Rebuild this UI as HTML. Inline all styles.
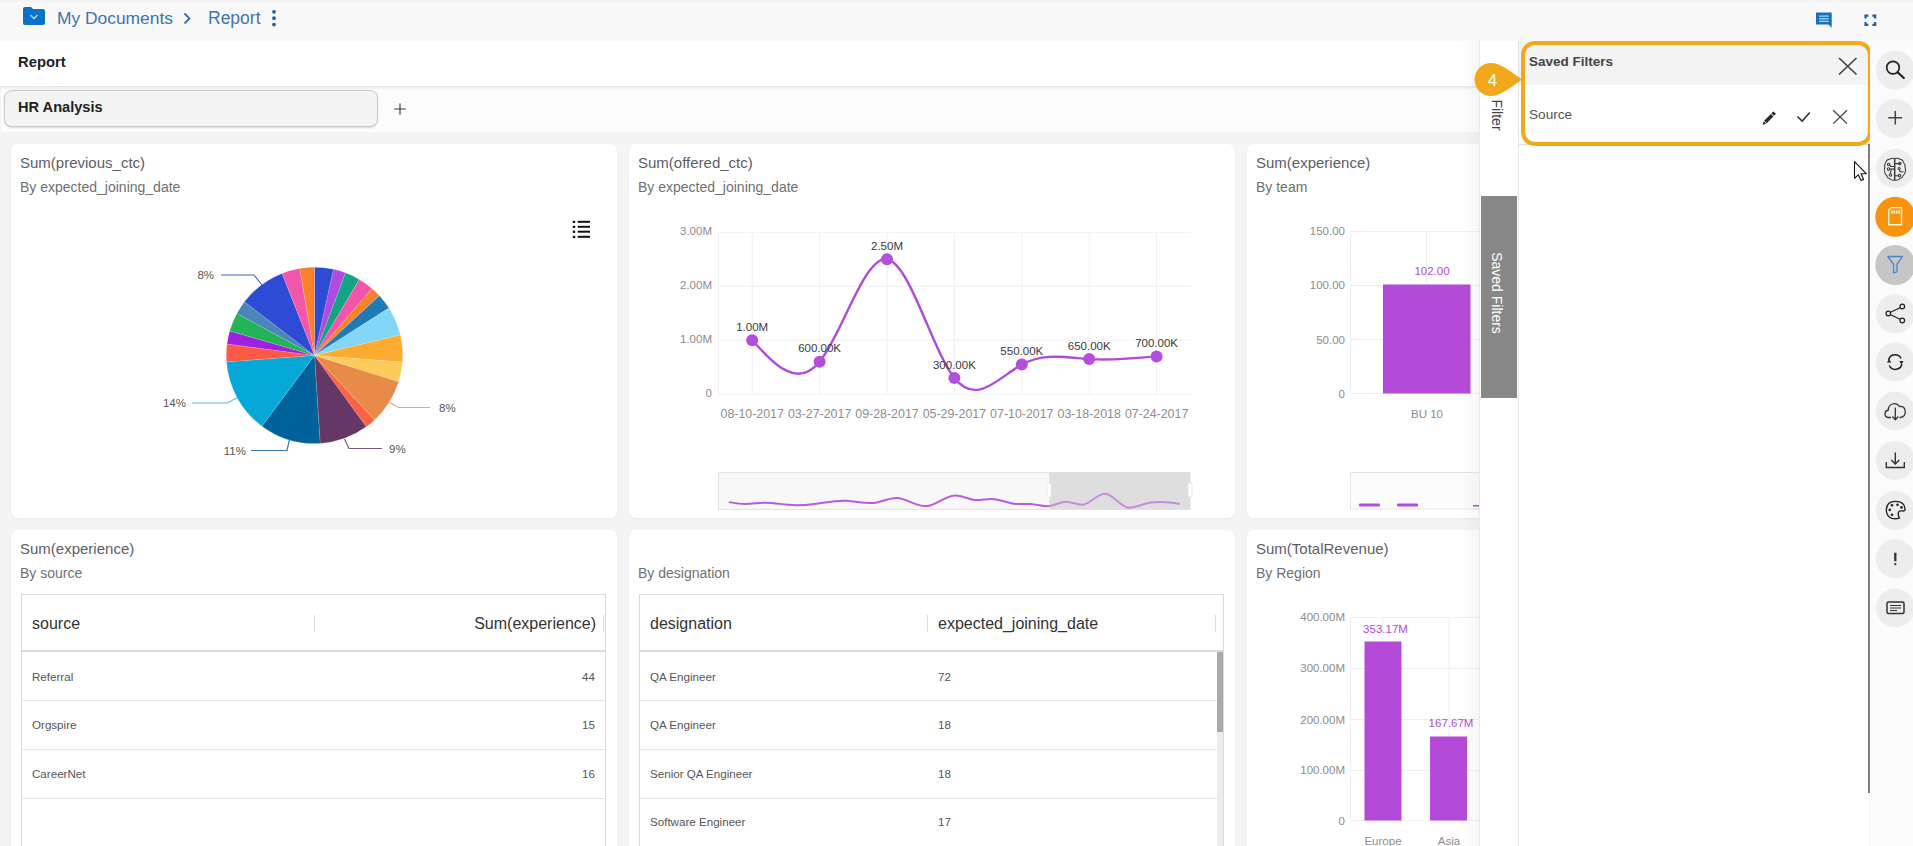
<!DOCTYPE html>
<html><head><meta charset="utf-8">
<style>
*{margin:0;padding:0;box-sizing:border-box}
html,body{width:1913px;height:846px;overflow:hidden;background:#f4f4f4;font-family:"Liberation Sans",sans-serif;position:relative}
.abs{position:absolute}
#topbar{left:0;top:0;width:1913px;height:41px;background:#f8f8f8;border-top:2px solid #f3f3f3}
#hdr{left:0;top:41px;width:1913px;height:45px;background:#fff;}
#tabs{left:0;top:86px;width:1913px;height:46px;background:#fdfdfd;box-shadow:inset 0 2px 3px rgba(0,0,0,.1)}
.card{position:absolute;background:#fff;border-radius:7px;box-shadow:0 1px 3px rgba(0,0,0,.05)}
.ttl{position:absolute;left:9px;font-size:15px;color:#5d5d68;white-space:nowrap}
.sub{position:absolute;left:9px;font-size:14px;color:#707070;white-space:nowrap}
.ax{font-family:"Liberation Sans",sans-serif;font-size:11px;fill:#8a8a8a}
.th{font-size:16px;color:#333;white-space:nowrap}
.td{font-size:11.6px;color:#555;white-space:nowrap}
.lbl{font-family:"Liberation Sans",sans-serif;font-size:11px;fill:#333}
</style></head><body>
<div id="topbar" class="abs"></div>
<div id="hdr" class="abs"></div>
<div id="tabs" class="abs"></div>

<!-- breadcrumb -->
<svg class="abs" style="left:22px;top:6px" width="24" height="20" viewBox="0 0 24 20">
  <path d="M1 3 Q1 1 3 1 H9 L11 3 H21 Q23 3 23 5 V17 Q23 19 21 19 H3 Q1 19 1 17 Z" fill="#0b72c6"/>
  <path d="M8.5 9 L12 12.5 L15.5 9" stroke="#90d2ff" stroke-width="1.6" fill="none"/>
</svg>
<div class="abs" style="left:57px;top:7.6px;font-size:17.4px;color:#3f74ad;white-space:nowrap">My Documents</div>
<svg class="abs" style="left:181px;top:11px" width="12" height="14" viewBox="0 0 12 14"><path d="M3.5 2.5 L8.5 7.5 L3.5 12.5" stroke="#3a70aa" stroke-width="1.8" fill="none"/></svg>
<div class="abs" style="left:208px;top:7.6px;font-size:17.5px;color:#3f74ad;white-space:nowrap">Report</div>
<svg class="abs" style="left:270px;top:9px" width="8" height="18" viewBox="0 0 8 18"><circle cx="4" cy="2.8" r="1.9" fill="#1e62a6"/><circle cx="4" cy="9.2" r="1.9" fill="#1e62a6"/><circle cx="4" cy="15.6" r="1.9" fill="#1e62a6"/></svg>

<div class="abs" style="left:18px;top:54px;font-size:14.8px;font-weight:bold;color:#222;white-space:nowrap">Report</div>
<div class="abs" style="left:4px;top:90px;width:374px;height:37px;border:1px solid #c9c9c9;border-radius:8px;background:#f4f4f4;box-shadow:0 1px 2px rgba(0,0,0,.15)"></div>
<div class="abs" style="left:18px;top:99px;font-size:14.6px;font-weight:bold;color:#222;white-space:nowrap">HR Analysis</div>
<svg class="abs" style="left:393px;top:102px" width="14" height="14" viewBox="0 0 14 14"><path d="M7 1.5 V12.5 M1.2 7 H12.8" stroke="#3a3a3a" stroke-width="1.15"/></svg>

<!-- cards -->
<div class="card" style="left:11px;top:144px;width:606px;height:374px">
  <div class="ttl" style="top:9.5px">Sum(previous_ctc)</div>
  <div class="sub" style="top:34.5px">By expected_joining_date</div>
</div>
<div class="card" style="left:629px;top:144px;width:606px;height:374px">
  <div class="ttl" style="top:9.5px">Sum(offered_ctc)</div>
  <div class="sub" style="top:34.5px">By expected_joining_date</div>
</div>
<div class="card" style="left:1247px;top:144px;width:606px;height:374px">
  <div class="ttl" style="top:9.5px">Sum(experience)</div>
  <div class="sub" style="top:34.5px">By team</div>
</div>
<div class="card" style="left:11px;top:530px;width:606px;height:374px">
  <div class="ttl" style="top:9.5px">Sum(experience)</div>
  <div class="sub" style="top:34.5px">By source</div>
</div>
<div class="card" style="left:629px;top:530px;width:606px;height:374px">
  <div class="sub" style="top:34.5px">By designation</div>
</div>
<div class="card" style="left:1247px;top:530px;width:606px;height:374px">
  <div class="ttl" style="top:9.5px">Sum(TotalRevenue)</div>
  <div class="sub" style="top:34.5px">By Region</div>
</div>

<!-- pie -->
<svg class="abs" style="left:11px;top:144px" width="606" height="374" viewBox="11 144 606 374">
<g stroke="#fff" stroke-width="0.3" stroke-opacity="0.45">
<path d="M314.5 355.4 L314.50 267.20 A88.2 88.2 0 0 1 333.59 269.29 Z" fill="#2e4bd6"/>
<path d="M314.5 355.4 L333.59 269.29 A88.2 88.2 0 0 1 345.53 272.84 Z" fill="#b04ae0"/>
<path d="M314.5 355.4 L345.53 272.84 A88.2 88.2 0 0 1 359.26 279.40 Z" fill="#12a583"/>
<path d="M314.5 355.4 L359.26 279.40 A88.2 88.2 0 0 1 372.02 288.53 Z" fill="#f256aa"/>
<path d="M314.5 355.4 L372.02 288.53 A88.2 88.2 0 0 1 379.42 295.70 Z" fill="#f8822c"/>
<path d="M314.5 355.4 L379.42 295.70 A88.2 88.2 0 0 1 388.89 308.01 Z" fill="#1f7bb4"/>
<path d="M314.5 355.4 L388.89 308.01 A88.2 88.2 0 0 1 400.30 334.96 Z" fill="#82d6f8"/>
<path d="M314.5 355.4 L400.30 334.96 A88.2 88.2 0 0 1 402.45 362.01 Z" fill="#fdab30"/>
<path d="M314.5 355.4 L402.45 362.01 A88.2 88.2 0 0 1 398.66 381.78 Z" fill="#fdcb5a"/>
<path d="M314.5 355.4 L398.66 381.78 A88.2 88.2 0 0 1 374.65 419.91 Z" fill="#e98b48"/>
<path d="M314.5 355.4 L374.65 419.91 A88.2 88.2 0 0 1 366.22 426.85 Z" fill="#fd6244"/>
<path d="M314.5 355.4 L366.22 426.85 A88.2 88.2 0 0 1 320.19 443.42 Z" fill="#643766"/>
<path d="M314.5 355.4 L320.19 443.42 A88.2 88.2 0 0 1 261.91 426.21 Z" fill="#00629b"/>
<path d="M314.5 355.4 L261.91 426.21 A88.2 88.2 0 0 1 226.54 361.86 Z" fill="#05a8d6"/>
<path d="M314.5 355.4 L226.54 361.86 A88.2 88.2 0 0 1 227.03 344.04 Z" fill="#ff5846"/>
<path d="M314.5 355.4 L227.03 344.04 A88.2 88.2 0 0 1 229.76 330.94 Z" fill="#a020e0"/>
<path d="M314.5 355.4 L229.76 330.94 A88.2 88.2 0 0 1 236.91 313.45 Z" fill="#22b455"/>
<path d="M314.5 355.4 L236.91 313.45 A88.2 88.2 0 0 1 244.43 301.83 Z" fill="#4b86b8"/>
<path d="M314.5 355.4 L244.43 301.83 A88.2 88.2 0 0 1 282.03 273.39 Z" fill="#2e4bd6"/>
<path d="M314.5 355.4 L282.03 273.39 A88.2 88.2 0 0 1 299.79 268.44 Z" fill="#f256aa"/>
<path d="M314.5 355.4 L299.79 268.44 A88.2 88.2 0 0 1 314.50 267.20 Z" fill="#f8822c"/>

</g>
<g fill="none" stroke-width="1.2">
<path d="M262 285 L254 275 H221" stroke="#4d5fd0"/>
<path d="M237 398 L227 403 H192" stroke="#5cc0e0"/>
<path d="M289.5 439.5 L287 450.5 H251" stroke="#3f7aa6"/>
<path d="M344.5 439 L349 448.5 H382" stroke="#7a5a7c"/>
<path d="M389 402 L398.5 407.5 H430" stroke="#eba37a"/>
</g>
<g fill="#555" font-size="11.5">
<text x="214" y="279" text-anchor="end">8%</text>
<text x="186" y="407" text-anchor="end">14%</text>
<text x="246" y="454.5" text-anchor="end">11%</text>
<text x="389" y="452.5">9%</text>
<text x="439" y="411.5">8%</text>
</g>
<g fill="#111">
<rect x="572.8" y="220.8" width="2.4" height="2.2"/><rect x="577.7" y="220.8" width="12.3" height="2"/>
<rect x="572.8" y="225.8" width="2.4" height="2.2"/><rect x="577.7" y="225.8" width="12.3" height="2"/>
<rect x="572.8" y="230.7" width="2.4" height="2.2"/><rect x="577.7" y="230.7" width="12.3" height="2"/>
<rect x="572.8" y="235.8" width="2.4" height="2.2"/><rect x="577.7" y="235.8" width="12.3" height="2"/>
</g>
</svg>

<!-- line -->
<svg class="abs" style="left:629px;top:144px" width="606" height="374" viewBox="629 144 606 374">
<g stroke="#f0f0f3" stroke-width="1"><line x1="718.5" y1="232.3" x2="1190.5" y2="232.3"/><line x1="718.5" y1="286.3" x2="1190.5" y2="286.3"/><line x1="718.5" y1="340.2" x2="1190.5" y2="340.2"/><line x1="718.5" y1="394.2" x2="1190.5" y2="394.2"/><line x1="752.2" y1="232.3" x2="752.2" y2="394.2"/><line x1="819.6" y1="232.3" x2="819.6" y2="394.2"/><line x1="887.0" y1="232.3" x2="887.0" y2="394.2"/><line x1="954.4" y1="232.3" x2="954.4" y2="394.2"/><line x1="1021.8" y1="232.3" x2="1021.8" y2="394.2"/><line x1="1089.2" y1="232.3" x2="1089.2" y2="394.2"/><line x1="1156.6" y1="232.3" x2="1156.6" y2="394.2"/><line x1="718.5" y1="232.3" x2="718.5" y2="394.2"/></g>
<g font-size="11.5" fill="#8c8c8c"><text x="712" y="234.9" text-anchor="end">3.00M</text><text x="712" y="288.9" text-anchor="end">2.00M</text><text x="712" y="342.8" text-anchor="end">1.00M</text><text x="712" y="396.8" text-anchor="end">0</text></g>
<g font-size="12.4" fill="#8c8c8c"><text x="752.2" y="417.5" text-anchor="middle">08-10-2017</text><text x="819.6" y="417.5" text-anchor="middle">03-27-2017</text><text x="887.0" y="417.5" text-anchor="middle">09-28-2017</text><text x="954.4" y="417.5" text-anchor="middle">05-29-2017</text><text x="1021.8" y="417.5" text-anchor="middle">07-10-2017</text><text x="1089.2" y="417.5" text-anchor="middle">03-18-2018</text><text x="1156.6" y="417.5" text-anchor="middle">07-24-2017</text></g>
<path d="M752.20 340.23 C774.67 364.67 797.13 389.11 819.60 361.82 C842.07 334.53 864.53 255.51 887.00 259.27 C909.47 263.04 931.93 349.58 954.40 378.01 C976.87 406.43 999.33 376.74 1021.80 364.52 C1044.27 352.30 1066.73 357.56 1089.20 359.12 C1111.67 360.68 1134.13 358.55 1156.60 356.42" fill="none" stroke="#ae4bd8" stroke-width="2.4"/>
<g fill="#b34fdc"><circle cx="752.2" cy="340.2" r="6"/><circle cx="819.6" cy="361.8" r="6"/><circle cx="887.0" cy="259.3" r="6"/><circle cx="954.4" cy="378.0" r="6"/><circle cx="1021.8" cy="364.5" r="6"/><circle cx="1089.2" cy="359.1" r="6"/><circle cx="1156.6" cy="356.4" r="6"/></g>
<g font-size="11.5" fill="#3a3a3a"><text x="752.2" y="330.7" text-anchor="middle">1.00M</text><text x="819.6" y="352.3" text-anchor="middle">600.00K</text><text x="887.0" y="249.8" text-anchor="middle">2.50M</text><text x="954.4" y="368.5" text-anchor="middle">300.00K</text><text x="1021.8" y="355.0" text-anchor="middle">550.00K</text><text x="1089.2" y="349.6" text-anchor="middle">650.00K</text><text x="1156.6" y="346.9" text-anchor="middle">700.00K</text></g>
<rect x="718.5" y="472.5" width="471.5" height="37" fill="#f8f8f8" stroke="#e2e2e2"/>
<rect x="1049.5" y="472.5" width="140.5" height="37" fill="#dedede"/>
<path d="M728.79 502.12 C734.30 503.05 739.81 503.97 745.32 503.99 C751.99 504.01 758.65 502.71 765.32 502.66 C772.87 502.59 780.42 504.13 787.98 504.79 C796.86 505.57 805.75 505.13 814.64 503.99 C825.30 502.61 835.96 500.22 846.63 500.79 C856.40 501.31 866.18 504.34 875.95 502.66 C883.06 501.43 890.17 497.72 897.28 498.12 C907.06 498.68 916.83 507.03 926.61 506.12 C935.94 505.25 945.27 495.96 954.60 495.46 C961.26 495.10 967.93 499.23 974.59 499.99 C980.37 500.65 986.15 498.77 991.92 498.92 C999.92 499.14 1007.92 503.27 1015.92 503.99 C1020.80 504.43 1025.69 503.60 1030.58 503.99 C1036.80 504.48 1043.02 506.95 1049.24 506.12 C1055.02 505.35 1060.79 501.73 1066.57 501.86 C1072.35 501.98 1078.12 505.85 1083.90 504.52 C1091.01 502.89 1098.12 493.38 1105.23 493.86 C1112.33 494.34 1119.44 504.80 1126.55 507.19 C1131.88 508.98 1137.22 506.23 1142.55 504.52 C1154.99 500.54 1167.43 502.27 1179.87 503.99" fill="none" stroke="#b04ad8" stroke-width="2" stroke-opacity="0.9"/>
<rect x="1049.5" y="473" width="140.5" height="36" fill="#dedede" fill-opacity="0.4"/>
<rect x="1047" y="483" width="4" height="14" rx="1" fill="#fff" stroke="#ddd" stroke-width="0.6"/>
<rect x="1188" y="483" width="4" height="14" rx="1" fill="#fff" stroke="#ddd" stroke-width="0.6"/>
</svg>

<!-- bars -->
<svg class="abs" style="left:1247px;top:144px" width="233" height="374" viewBox="1247 144 233 374">
<g stroke="#efeff3" stroke-width="1">
<line x1="1350.5" y1="231.5" x2="1480" y2="231.5"/><line x1="1350.5" y1="285.5" x2="1480" y2="285.5"/>
<line x1="1350.5" y1="339.5" x2="1480" y2="339.5"/><line x1="1350.5" y1="393.5" x2="1480" y2="393.5"/>
<line x1="1426.5" y1="231.5" x2="1426.5" y2="393.5"/><line x1="1350.5" y1="231.5" x2="1350.5" y2="393.5"/>
</g>
<g font-size="11.5" fill="#8c8c8c" text-anchor="end">
<text x="1345" y="235">150.00</text><text x="1345" y="289">100.00</text><text x="1345" y="343.5">50.00</text><text x="1345" y="397.5">0</text>
</g>
<rect x="1383" y="284.5" width="87.5" height="109" fill="#b44bd8"/>
<text x="1432" y="275" font-size="11.5" fill="#b04ad8" text-anchor="middle">102.00</text>
<text x="1427" y="418" font-size="11.5" fill="#8c8c8c" text-anchor="middle">BU 10</text>
<rect x="1350.5" y="472.5" width="140" height="36.5" fill="#fcfcfc" stroke="#e4e4e4"/>
<rect x="1359" y="503.5" width="21" height="3" rx="1" fill="#b44bd8"/>
<rect x="1397" y="503.5" width="21" height="3" rx="1" fill="#b44bd8"/>
<rect x="1473" y="505" width="7" height="1.5" fill="#b44bd8"/>
</svg>
<svg class="abs" style="left:1247px;top:530px" width="233" height="316" viewBox="1247 530 233 316">
<g stroke="#efeff3" stroke-width="1">
<line x1="1350.5" y1="617.5" x2="1480" y2="617.5"/><line x1="1350.5" y1="668.5" x2="1480" y2="668.5"/>
<line x1="1350.5" y1="719.5" x2="1480" y2="719.5"/><line x1="1350.5" y1="770.5" x2="1480" y2="770.5"/>
<line x1="1350.5" y1="820.5" x2="1480" y2="820.5"/>
<line x1="1383" y1="617.5" x2="1383" y2="820.5"/><line x1="1449" y1="617.5" x2="1449" y2="820.5"/>
<line x1="1350.5" y1="617.5" x2="1350.5" y2="820.5"/>
</g>
<g font-size="11.5" fill="#8c8c8c" text-anchor="end">
<text x="1345" y="621">400.00M</text><text x="1345" y="672">300.00M</text><text x="1345" y="723.5">200.00M</text><text x="1345" y="774">100.00M</text><text x="1345" y="824.5">0</text>
</g>
<rect x="1364.5" y="641.5" width="37" height="179" fill="#b44bd8"/>
<rect x="1430" y="736.5" width="37" height="84" fill="#b44bd8"/>
<text x="1385.5" y="633" font-size="11.5" fill="#b04ad8" text-anchor="middle">353.17M</text>
<text x="1451" y="727" font-size="11.5" fill="#b04ad8" text-anchor="middle">167.67M</text>
<text x="1383" y="845" font-size="11.5" fill="#8c8c8c" text-anchor="middle">Europe</text>
<text x="1449" y="845" font-size="11.5" fill="#8c8c8c" text-anchor="middle">Asia</text>
</svg>
<!-- tables -->
<div class="abs" style="left:21px;top:594px;width:585px;height:260px;border:1px solid #dadada;background:#fff"></div>
<div class="abs" style="left:21px;top:650px;width:585px;height:2px;background:#dcdcdc"></div>
<div class="abs" style="left:314px;top:615px;width:1px;height:17px;background:#dcdcdc"></div>
<div class="abs" style="left:603px;top:615px;width:1px;height:17px;background:#dcdcdc"></div>
<div class="abs th" style="left:32px;top:615px">source</div>
<div class="abs th" style="right:1317px;top:615px">Sum(experience)</div>
<div class="abs" style="left:22px;top:700.0px;width:583px;height:1px;background:#e6e6e6"></div>
<div class="abs td" style="left:32px;top:669.5px">Referral</div>
<div class="abs td" style="right:1318px;top:669.5px">44</div>
<div class="abs" style="left:22px;top:749.0px;width:583px;height:1px;background:#e6e6e6"></div>
<div class="abs td" style="left:32px;top:718.1px">Orgspire</div>
<div class="abs td" style="right:1318px;top:718.1px">15</div>
<div class="abs" style="left:22px;top:797.8px;width:583px;height:1px;background:#e6e6e6"></div>
<div class="abs td" style="left:32px;top:766.7px">CareerNet</div>
<div class="abs td" style="right:1318px;top:766.7px">16</div>
<div class="abs" style="left:639px;top:594px;width:585px;height:260px;border:1px solid #dadada;background:#fff"></div>
<div class="abs" style="left:639px;top:650px;width:585px;height:2px;background:#dcdcdc"></div>
<div class="abs" style="left:927px;top:615px;width:1px;height:17px;background:#dcdcdc"></div>
<div class="abs" style="left:1215px;top:615px;width:1px;height:17px;background:#dcdcdc"></div>
<div class="abs th" style="left:650px;top:615px">designation</div>
<div class="abs th" style="left:938px;top:615px">expected_joining_date</div>
<div class="abs" style="left:640px;top:700.0px;width:583px;height:1px;background:#e6e6e6"></div>
<div class="abs td" style="left:650px;top:669.5px">QA Engineer</div>
<div class="abs td" style="left:938px;top:669.5px">72</div>
<div class="abs" style="left:640px;top:749.0px;width:583px;height:1px;background:#e6e6e6"></div>
<div class="abs td" style="left:650px;top:718.1px">QA Engineer</div>
<div class="abs td" style="left:938px;top:718.1px">18</div>
<div class="abs" style="left:640px;top:797.8px;width:583px;height:1px;background:#e6e6e6"></div>
<div class="abs td" style="left:650px;top:766.7px">Senior QA Engineer</div>
<div class="abs td" style="left:938px;top:766.7px">18</div>
<div class="abs td" style="left:650px;top:815.3px">Software Engineer</div>
<div class="abs td" style="left:938px;top:815.3px">17</div>
<div class="abs" style="left:1217px;top:652px;width:6px;height:194px;background:#ececec"></div>
<div class="abs" style="left:1217px;top:652px;width:6px;height:80px;background:#a9a9a9;border-radius:1px"></div>

<!-- filter panel -->
<div class="abs" style="left:1460px;top:41px;width:20px;height:805px;background:linear-gradient(to right,rgba(0,0,0,0),rgba(0,0,0,.035))"></div>
<div class="abs" style="left:1479px;top:41px;width:40px;height:805px;background:#fff;border-left:1px solid #e9e9e9;border-right:1px solid #e3e3e3"></div>
<div class="abs" style="left:1481px;top:196px;width:36px;height:202px;background:#878787"></div>
<div class="abs" style="left:1497px;top:293px;transform:translate(-50%,-50%) rotate(90deg);font-size:14px;color:#fff;white-space:nowrap">Saved Filters</div>
<div class="abs" style="left:1497px;top:115px;transform:translate(-50%,-50%) rotate(90deg);font-size:14px;color:#444;white-space:nowrap">Filter</div>
<div class="abs" style="left:1519px;top:41px;width:350px;height:805px;background:#fff"></div>
<div class="abs" style="left:1519px;top:41px;width:350px;height:44px;background:#f3f3f3"></div>
<div class="abs" style="left:1519px;top:144px;width:350px;height:1px;background:#dedede"></div>
<div class="abs" style="left:1529px;top:53.5px;font-size:13.5px;font-weight:bold;color:#444;white-space:nowrap">Saved Filters</div>
<div class="abs" style="left:1529px;top:107px;font-size:13.6px;color:#555;white-space:nowrap">Source</div>
<svg class="abs" style="left:1750px;top:50px" width="120" height="85" viewBox="1750 50 120 85">
<path d="M1839 58 L1856.5 74.5 M1856.5 58 L1839 74.5" stroke="#444" stroke-width="1.7" fill="none"/>
<g transform="translate(1768.7 118.6) rotate(-45) scale(0.9)" fill="#2a2a2a"><path d="M-9.6 0 L-6 -2 V2 Z"/><rect x="-5.2" y="-2" width="10.6" height="4"/><rect x="6.2" y="-2" width="3.2" height="4" rx="0.5"/></g>
<path d="M1797.3 116.5 L1802.2 121 L1809.8 112.5" stroke="#333" stroke-width="1.6" fill="none"/>
<path d="M1833.2 110.2 L1847 123.6 M1847 110.2 L1833.2 123.6" stroke="#444" stroke-width="1.3" fill="none"/>
</svg>
<div class="abs" style="left:1521px;top:41px;width:351px;height:105px;border:4px solid #f1a81a;border-radius:14px"></div>
<svg class="abs" style="left:1470px;top:60px" width="56" height="40" viewBox="1470 60 56 40">
<path d="M1491 63 C1499 63 1506 68 1522 79.5 C1506 91 1499 96 1491 96 A16.5 16.5 0 0 1 1491 63 Z" fill="#f1a81a"/>
<text x="1492.5" y="86" font-size="17" fill="#fff" text-anchor="middle">4</text>
</svg>
<div class="abs" style="left:1868px;top:144px;width:2px;height:649px;background:#7d7d7d"></div>
<div class="abs" style="left:1870px;top:41px;width:43px;height:805px;background:#fbfbfb"></div>

<svg class="abs" style="left:1805px;top:0px" width="108" height="846" viewBox="1805 0 108 846">
<!-- top icons -->
<path d="M1816 12.5 H1831.7 V27.8 L1828.5 24.6 H1816 Z" fill="#1a6fb8"/>
<g stroke="#8fd0ff" stroke-width="1.4"><line x1="1819" y1="16.1" x2="1828.9" y2="16.1"/><line x1="1819" y1="18.8" x2="1828.9" y2="18.8"/><line x1="1819" y1="21.4" x2="1828.9" y2="21.4"/></g>
<g stroke="#1a5f9e" stroke-width="2.2" fill="none">
<path d="M1865.5 18.5 V15.7 H1868.3"/><path d="M1872.4 15.7 H1875.2 V18.5"/><path d="M1865.5 22 V24.8 H1868.3"/><path d="M1872.4 24.8 H1875.2 V22"/>
</g>
<!-- sidebar circles -->
<g fill="#ededed">
<circle cx="1895.3" cy="70.3" r="19.5"/><circle cx="1895.3" cy="118.6" r="19.5"/><circle cx="1895.3" cy="168.6" r="19.5"/>
<circle cx="1895.3" cy="313.8" r="19.5"/><circle cx="1895.3" cy="362" r="19.5"/><circle cx="1895.3" cy="411" r="19.5"/>
<circle cx="1895.3" cy="460.5" r="19.5"/><circle cx="1895.3" cy="510.4" r="19.5"/><circle cx="1895.3" cy="558.7" r="19.5"/><circle cx="1895.3" cy="608" r="19.5"/>
</g>
<circle cx="1895.3" cy="216.8" r="20" fill="#f7930f"/>
<circle cx="1895.3" cy="265" r="20" fill="#c6c6c6"/>
<!-- search -->
<circle cx="1893" cy="67.6" r="6.3" fill="none" stroke="#222" stroke-width="1.7"/>
<path d="M1897.6 72.2 L1903.8 78" stroke="#222" stroke-width="2.2" stroke-linecap="round"/>
<!-- plus -->
<path d="M1895.3 111 V124.6 M1888.2 117.8 H1902.1" stroke="#444" stroke-width="1.5"/>
<!-- brain -->
<g fill="none" stroke="#3a3a3a" stroke-width="1.05">
<path d="M1894.7 158.6 Q1891 157.6 1889.5 159.3 Q1886.5 159.6 1885.8 162.5 Q1884 164.5 1884.8 167.2 Q1883.8 169.5 1884.6 171.5 Q1884.8 174 1886.7 175.5 Q1887 178 1889.5 178.6 Q1891.5 180.6 1894.7 180.2"/>
<path d="M1894.7 158.6 Q1898.4 157.6 1899.9 159.3 Q1902.9 159.6 1903.6 162.5 Q1905.6 164.5 1905 167.2 Q1906 169.8 1905.2 172 Q1905 174.4 1903 175.6 Q1902.4 178 1899.9 178.6 Q1898 180.6 1894.7 180.2"/>
<path d="M1894.7 158.6 V180.2" stroke-width="1.5"/>
<path d="M1889.6 164.6 L1890.6 166.5 H1894.5 M1889.6 169.1 H1894.5 M1890.4 173.7 V171.5 L1891.5 170.5 M1900.4 163.6 H1894.8 M1899.3 168.9 L1899.9 171.8 H1903.6 M1899.3 175.7 H1894.8"/>
<circle cx="1888.6" cy="164.4" r="1.2"/><circle cx="1888.5" cy="169.1" r="1.3"/><circle cx="1890.5" cy="175" r="1.3"/>
<circle cx="1899.8" cy="163.6" r="1.3"/><circle cx="1899.1" cy="168.5" r="1.1"/><circle cx="1899.5" cy="175.6" r="1.3"/>
</g>
<!-- sd card orange -->
<path d="M1888.8 210 L1891.3 207.6 H1901.5 V224.8 H1888.8 Z" fill="none" stroke="#fff3d0" stroke-width="1.4"/>
<g fill="#fff3d0"><rect x="1891.3" y="210.4" width="1.6" height="3.2"/><rect x="1893.6" y="210.4" width="1.6" height="3.2"/><rect x="1895.9" y="210.4" width="1.6" height="3.2"/><rect x="1898.2" y="210.4" width="1.6" height="3.2"/></g>
<!-- funnel -->
<path d="M1887.8 256.5 H1902.4 L1897 264.3 V271.8 L1893.6 272.8 V264.3 Z" fill="none" stroke="#4a84cc" stroke-width="1.3" stroke-linejoin="round"/>
<!-- share -->
<g fill="none" stroke="#222" stroke-width="1.25">
<circle cx="1902.3" cy="306.5" r="2.3"/><circle cx="1902.3" cy="320.5" r="2.3"/><circle cx="1888.3" cy="313.5" r="2.3"/>
<path d="M1890.6 312.3 L1900 307.7 M1890.6 314.7 L1900 319.3"/>
</g>
<!-- refresh -->
<g fill="none" stroke="#222" stroke-width="1.5">
<path d="M1888.6 360 A6.6 6.6 0 0 1 1901 358.5"/><path d="M1901.8 364 A6.6 6.6 0 0 1 1889.3 365.5"/>
</g>
<path d="M1887 362.5 L1891.3 362.5 L1889 359 Z M1903.5 361 L1899.3 361 L1901.6 364.5 Z" fill="#222"/>
<!-- cloud -->
<path d="M1891 417.5 H1888 Q1884.8 417 1885 413.5 Q1885.3 410.5 1888.3 410 Q1888.3 405.5 1892.5 404 Q1896.8 402.5 1899.5 406.5 Q1905 406 1905.3 411.5 Q1905.3 417 1900.5 417.5 H1899.5" fill="none" stroke="#333" stroke-width="1.3"/>
<path d="M1895.3 407.5 V419.5 M1892.3 416.5 L1895.3 419.8 L1898.3 416.5" fill="none" stroke="#333" stroke-width="1.3"/>
<!-- download -->
<path d="M1886.3 462 V467.5 H1904.3 V462" fill="none" stroke="#333" stroke-width="1.4"/>
<path d="M1895.3 452.5 V464 M1891.3 460 L1895.3 464 L1899.3 460" fill="none" stroke="#333" stroke-width="1.4"/>
<g transform="translate(0 1.4)"><!-- palette -->
<path d="M1895.5 500 Q1904.5 500 1905 507.5 Q1905 510 1902 509.5 Q1898.5 509 1898.3 512 Q1898 514.5 1899.5 516.5 Q1896 518 1892 517 Q1886.5 515 1886.3 508.5 Q1886.5 500 1895.5 500 Z" fill="none" stroke="#222" stroke-width="1.4"/>
<g fill="#222"><circle cx="1892" cy="503.8" r="1.3"/><circle cx="1897.5" cy="503.3" r="1.3"/><circle cx="1901.5" cy="506" r="1.3"/><circle cx="1889.8" cy="508.5" r="1.3"/><circle cx="1892" cy="513.3" r="1.3"/></g>
</g>
<g transform="translate(0 1.7)"><!-- ! -->
<path d="M1895.3 551 V559.5" stroke="#333" stroke-width="2.3"/><circle cx="1895.3" cy="562.5" r="1.1" fill="#333"/>
</g>
<g transform="translate(0 1)"><!-- comment -->
<rect x="1887" y="601" width="17" height="11.5" rx="1.5" fill="none" stroke="#333" stroke-width="1.5"/>
<path d="M1890 604.5 H1901 M1890 607 H1901 M1890 609.5 H1897" stroke="#333" stroke-width="1.1"/>
</g>
<!-- cursor -->
<path d="M1854.5 161.7 V178.3 L1858.3 174.8 L1861 180.6 L1863.6 179.4 L1861 173.7 H1866.2 Z" fill="#fff" stroke="#111" stroke-width="1.1" stroke-linejoin="round"/>
</svg>
</body></html>
